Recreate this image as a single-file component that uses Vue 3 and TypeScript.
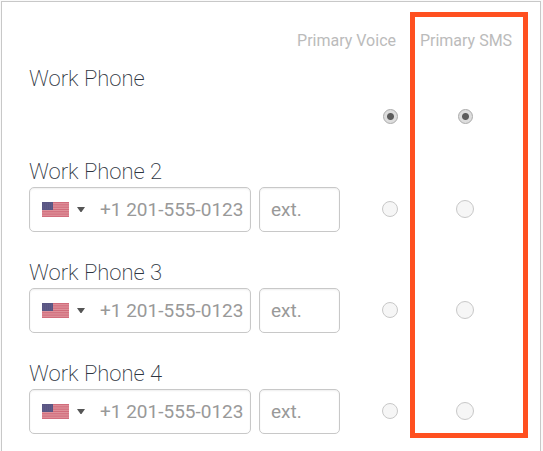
<script setup lang="ts">
import { ref } from 'vue'

interface PhoneRow {
  id: string
  label: string
  editable: boolean
}

const rows: PhoneRow[] = [
  { id: 'work1', label: 'Work Phone', editable: false },
  { id: 'work2', label: 'Work Phone 2', editable: true },
  { id: 'work3', label: 'Work Phone 3', editable: true },
  { id: 'work4', label: 'Work Phone 4', editable: true },
]

const primaryVoice = ref('work1')
const primarySms = ref('work1')
const stripes = [0, 1, 2, 3, 4, 5, 6]
</script>

<template>
  <form class="card">
    <header class="headings">
      <span id="voice-heading">Primary Voice</span>
      <span id="sms-heading" class="sms-heading">Primary SMS</span>
    </header>

    <section v-for="row in rows" :key="row.id" class="row" :class="{ fixed: !row.editable }">
      <label :id="row.id + '-label'" class="label" :for="row.editable ? row.id : undefined">{{ row.label }}</label>
      <div class="controls">
        <div class="fields">
          <template v-if="row.editable">
            <div class="phone">
              <button type="button" class="country" aria-label="United States">
                <svg class="flag" viewBox="0 0 27 15" aria-hidden="true">
                  <rect width="27" height="15" fill="#e0959e" />
                  <rect v-for="n in stripes" :key="n" width="27" height="1.15" :transform="`translate(0 ${n * 2.3})`" fill="#d06c7b" />
                  <rect width="11" height="8" fill="#5a5684" />
                  <path d="M1 2h9M1 4h9M1 6h9" stroke="#6c6992" stroke-width=".6" stroke-dasharray="1 1" />
                </svg>
                <svg class="caret" viewBox="0 0 8 5" aria-hidden="true"><path d="M0 0h8L4.5 5h-1z" fill="#555" /></svg>
              </button>
              <input :id="row.id" class="number" type="tel" placeholder="+1 201-555-0123" />
            </div>
            <input class="ext" type="text" placeholder="ext." :aria-label="row.label + ' extension'" />
          </template>
        </div>
        <div class="voice">
          <input v-model="primaryVoice" type="radio" name="voice" :value="row.id" :aria-labelledby="'voice-heading ' + row.id + '-label'" />
        </div>
        <div class="sms">
          <input v-model="primarySms" type="radio" name="sms" :value="row.id" :aria-labelledby="'sms-heading ' + row.id + '-label'" />
        </div>
      </div>
    </section>

    <div class="highlight" aria-hidden="true"></div>
  </form>
</template>

<style>
body {
  background: #fafafa;
}
</style>

<style scoped>
.card,
.card * {
  box-sizing: border-box;
}
.card {
  position: relative;
  margin: 1px 2px 0 1px;
  padding: 28px 6px 17px 27px;
  border: 1px solid #c8c8c8;
  border-bottom: 0;
  background: #fff;
  font-family: Roboto, sans-serif;
}
.headings {
  display: flex;
  justify-content: flex-end;
  gap: 2px;
  padding-bottom: 14px;
  font-size: 16px;
  line-height: 22px;
  color: #bbb;
}
.sms-heading {
  width: 136px;
  text-align: center;
}
.row + .row {
  margin-top: 28px;
}
.row.fixed + .row {
  margin-top: 20px;
}
.label {
  display: block;
  margin-bottom: 2px;
  font-size: 22px;
  font-weight: 200;
  line-height: 26px;
  color: #2e3541;
}
.controls {
  display: grid;
  grid-template-columns: minmax(0, 1fr) 58px 136px;
  align-items: center;
  min-height: 45px;
}
.fields {
  display: flex;
  gap: 8px;
}
.phone,
.ext {
  height: 45px;
  border: 1px solid #c8c8c8;
  border-radius: 5px;
  background: #fff;
  box-shadow: inset 0 1px 2px #eee;
}
.phone {
  display: flex;
  flex: 1;
  min-width: 0;
}
.country {
  display: flex;
  align-items: center;
  gap: 8px;
  padding: 0 15px 0 12px;
  border: 0;
  background: none;
}
.flag {
  width: 27px;
  height: 15px;
}
.caret {
  width: 8px;
  height: 5px;
}
.number,
.ext {
  font-family: inherit;
  font-size: 19px;
  color: #555;
  outline: 0;
}
.number {
  flex: 1;
  min-width: 0;
  padding: 0;
  border: 0;
  background: none;
}
.ext {
  width: 81px;
  padding: 0 11px;
}
.number::placeholder,
.ext::placeholder {
  color: #999;
  opacity: 1;
}
.voice,
.sms {
  display: flex;
  justify-content: flex-end;
  padding-bottom: 2px;
}
.fixed .voice,
.fixed .sms {
  padding-bottom: 0;
}
.sms {
  justify-content: center;
  padding-right: 2px;
}
input[type='radio'] {
  appearance: none;
  width: 16px;
  height: 16px;
  margin: 0;
  border: 1px solid #c8c8c8;
  border-radius: 50%;
  background: #f6f6f6;
}
.sms input[type='radio'] {
  width: 18px;
  height: 18px;
}
.voice input[type='radio']:checked,
.sms input[type='radio']:checked {
  width: 15px;
  height: 15px;
  border-color: #aaa;
  background: radial-gradient(circle, #5c5c5c 0 3px, #ddd 4px);
}
.highlight {
  position: absolute;
  top: 10px;
  right: 12px;
  bottom: 13px;
  width: 118px;
  border: 5px solid #ff5020;
  pointer-events: none;
}
</style>
